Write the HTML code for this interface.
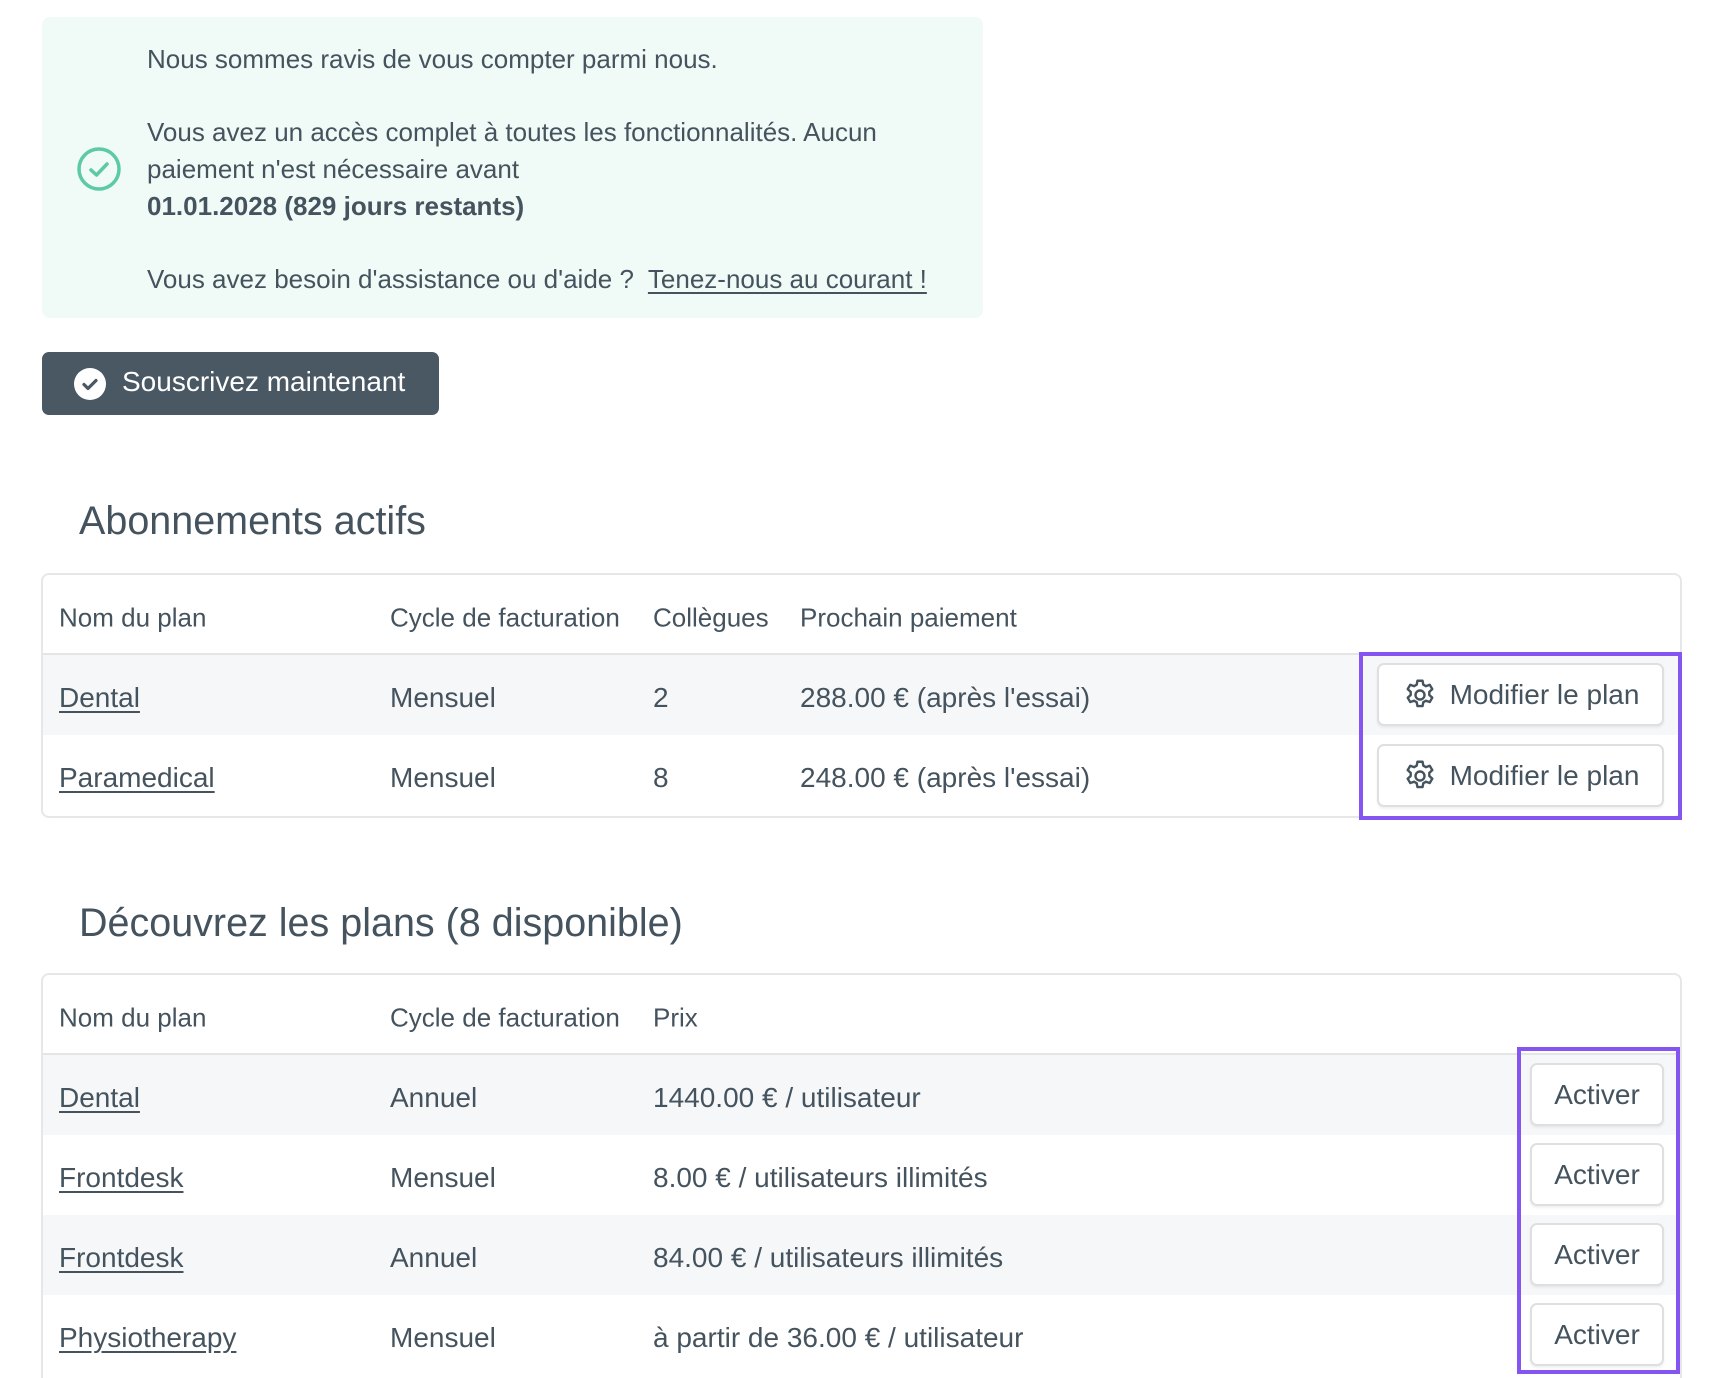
<!DOCTYPE html>
<html style="width:1722px;height:1378px;overflow:hidden"><head><meta charset="utf-8"><style>
*{box-sizing:border-box;margin:0;padding:0}
body{width:1722px;height:1378px;overflow:hidden;background:#fff;font-family:"Liberation Sans",Roboto,sans-serif;color:#44535e;position:relative}
.abs{position:absolute}
.note{left:42px;top:17px;width:941px;height:301px;background:#f0faf6;border-radius:8px}
.t{position:absolute;left:147px;font-size:26px;white-space:nowrap;line-height:30px}
.btn{left:42px;top:352px;width:397px;height:63px;background:#4a5864;border-radius:7px;color:#fff;font-size:28px}
h2{position:absolute;left:79px;font-weight:400;font-size:39.5px;color:#44535e;white-space:nowrap}
.tbl{position:absolute;left:41px;width:1641px;border:2px solid #e6e7e9;border-radius:8px;overflow:hidden}
.row{position:relative;height:80px}
.row.g{background:#f6f7f9}
.hd{height:80px;border-bottom:2px solid #e4e5e7;position:relative}
.c{position:absolute;top:54%;transform:translateY(-50%);white-space:nowrap;font-size:28px}
.hd .c{font-size:26px;top:55%}
u{text-decoration:underline;text-underline-offset:4px}
.pb{position:absolute;border:4px solid #8455f0}
.ob{position:absolute;background:#fff;border:2px solid #dedfe1;border-radius:7px;box-shadow:0 2px 2px rgba(0,0,0,.06);font-size:28px;color:#44535e;display:flex;align-items:center;justify-content:center;gap:12px}
</style></head><body>
<div class="abs note"></div>
<svg class="abs" style="left:76px;top:146px" width="46" height="46" viewBox="0 0 46 46"><circle cx="23" cy="23" r="20" fill="none" stroke="#5ccaa3" stroke-width="3.5"/><path d="M15 24l5.5 5L31 18" fill="none" stroke="#5ccaa3" stroke-width="3.5" stroke-linecap="round" stroke-linejoin="round"/></svg>
<div class="t" style="top:44px">Nous sommes ravis de vous compter parmi nous.</div>
<div class="t" style="top:117px">Vous avez un accès complet à toutes les fonctionnalités. Aucun</div>
<div class="t" style="top:154px">paiement n'est nécessaire avant</div>
<div class="t" style="top:191px;font-weight:700">01.01.2028 (829 jours restants)</div>
<div class="t" style="top:264px">Vous avez besoin d'assistance ou d'aide ?&nbsp; <u>Tenez-nous au courant !</u></div>
<div class="abs btn"><svg class="abs" style="left:32px;top:16px" width="32" height="32" viewBox="0 0 32 32"><circle cx="16" cy="16" r="16" fill="#fff"/><path d="M10 16.5l4 4 8-8" fill="none" stroke="#4a5864" stroke-width="3.2" stroke-linecap="round" stroke-linejoin="round"/></svg><span class="abs" style="left:80px;top:14px;white-space:nowrap">Souscrivez maintenant</span></div>

<h2 style="top:499px">Abonnements actifs</h2>
<div class="tbl" style="top:573px;height:245px">
<div class="hd"><span class="c" style="left:16px">Nom du plan</span><span class="c" style="left:347px">Cycle de facturation</span><span class="c" style="left:610px">Collègues</span><span class="c" style="left:757px">Prochain paiement</span></div>
<div class="row g"><span class="c" style="left:16px"><u>Dental</u></span><span class="c" style="left:347px">Mensuel</span><span class="c" style="left:610px">2</span><span class="c" style="left:757px">288.00 € (après l'essai)</span></div>
<div class="row"><span class="c" style="left:16px"><u>Paramedical</u></span><span class="c" style="left:347px">Mensuel</span><span class="c" style="left:610px">8</span><span class="c" style="left:757px">248.00 € (après l'essai)</span></div>
</div>
<div class="pb" style="left:1359px;top:652px;width:323px;height:168px"></div>
<div class="ob" style="left:1377px;top:663px;width:287px;height:63px"><svg width="36" height="36" viewBox="0 0 24 24" fill="none" stroke="#44535e" stroke-width="1.6"><path d="M10.3 2.5h3.4l.5 2.6 1.8 1 2.5-.9 1.7 2.9-2 1.8v2.1l2 1.8-1.7 2.9-2.5-.9-1.8 1-.5 2.6h-3.4l-.5-2.6-1.8-1-2.5.9-1.7-2.9 2-1.8v-2.1l-2-1.8 1.7-2.9 2.5.9 1.8-1z" stroke-linejoin="round"/><circle cx="12" cy="12" r="3"/></svg>Modifier le plan</div>
<div class="ob" style="left:1377px;top:744px;width:287px;height:63px"><svg width="36" height="36" viewBox="0 0 24 24" fill="none" stroke="#44535e" stroke-width="1.6"><path d="M10.3 2.5h3.4l.5 2.6 1.8 1 2.5-.9 1.7 2.9-2 1.8v2.1l2 1.8-1.7 2.9-2.5-.9-1.8 1-.5 2.6h-3.4l-.5-2.6-1.8-1-2.5.9-1.7-2.9 2-1.8v-2.1l-2-1.8 1.7-2.9 2.5.9 1.8-1z" stroke-linejoin="round"/><circle cx="12" cy="12" r="3"/></svg>Modifier le plan</div>

<h2 style="top:901px">Découvrez les plans (8 disponible)</h2>
<div class="tbl" style="top:973px;height:405px;border-bottom:none;border-radius:8px 8px 0 0">
<div class="hd"><span class="c" style="left:16px">Nom du plan</span><span class="c" style="left:347px">Cycle de facturation</span><span class="c" style="left:610px">Prix</span></div>
<div class="row g"><span class="c" style="left:16px"><u>Dental</u></span><span class="c" style="left:347px">Annuel</span><span class="c" style="left:610px">1440.00 € / utilisateur</span></div>
<div class="row"><span class="c" style="left:16px"><u>Frontdesk</u></span><span class="c" style="left:347px">Mensuel</span><span class="c" style="left:610px">8.00 € / utilisateurs illimités</span></div>
<div class="row g"><span class="c" style="left:16px"><u>Frontdesk</u></span><span class="c" style="left:347px">Annuel</span><span class="c" style="left:610px">84.00 € / utilisateurs illimités</span></div>
<div class="row"><span class="c" style="left:16px"><u>Physiotherapy</u></span><span class="c" style="left:347px">Mensuel</span><span class="c" style="left:610px">à partir de 36.00 € / utilisateur</span></div>
</div>
<div class="pb" style="left:1517px;top:1047px;width:163px;height:327px"></div>
<div class="ob" style="left:1530px;top:1063px;width:134px;height:63px">Activer</div>
<div class="ob" style="left:1530px;top:1143px;width:134px;height:63px">Activer</div>
<div class="ob" style="left:1530px;top:1223px;width:134px;height:63px">Activer</div>
<div class="ob" style="left:1530px;top:1303px;width:134px;height:63px">Activer</div>
</body></html>
